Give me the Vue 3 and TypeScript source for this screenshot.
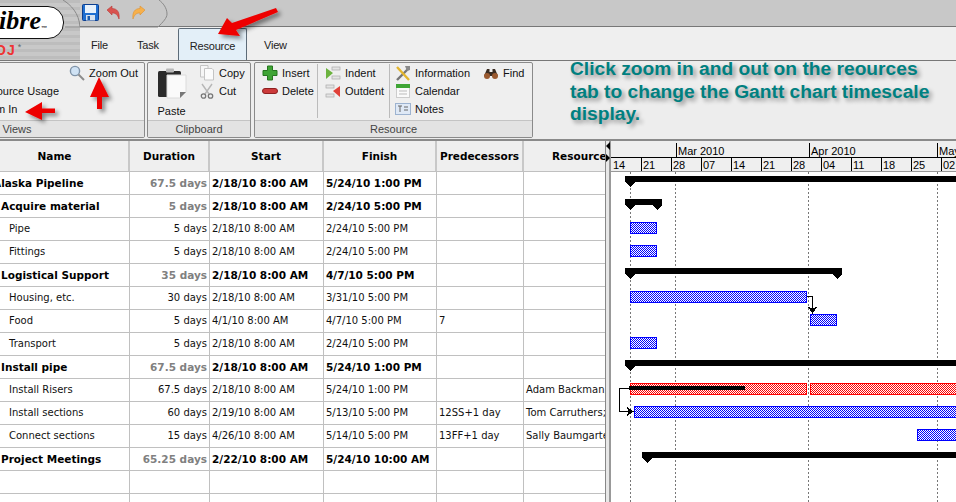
<script setup lang="ts">
interface Row {
  name: string; level: number; bold: boolean; dur: string; start: string; finish: string; pred: string; res: string;
}
const mk = (name: string, level: number, bold: boolean, dur = '', start = '', finish = '', pred = '', res = ''): Row =>
  ({ name, level, bold, dur, start, finish, pred, res });
const rows: Row[] = [
  mk('Alaska Pipeline', 0, true, '67.5 days', '2/18/10 8:00 AM', '5/24/10 1:00 PM'),
  mk('Acquire material', 1, true, '5 days', '2/18/10 8:00 AM', '2/24/10 5:00 PM'),
  mk('Pipe', 2, false, '5 days', '2/18/10 8:00 AM', '2/24/10 5:00 PM'),
  mk('Fittings', 2, false, '5 days', '2/18/10 8:00 AM', '2/24/10 5:00 PM'),
  mk('Logistical Support', 1, true, '35 days', '2/18/10 8:00 AM', '4/7/10 5:00 PM'),
  mk('Housing, etc.', 2, false, '30 days', '2/18/10 8:00 AM', '3/31/10 5:00 PM'),
  mk('Food', 2, false, '5 days', '4/1/10 8:00 AM', '4/7/10 5:00 PM', '7'),
  mk('Transport', 2, false, '5 days', '2/18/10 8:00 AM', '2/24/10 5:00 PM'),
  mk('Install pipe', 1, true, '67.5 days', '2/18/10 8:00 AM', '5/24/10 1:00 PM'),
  mk('Install Risers', 2, false, '67.5 days', '2/18/10 8:00 AM', '5/24/10 1:00 PM', '', 'Adam Backman;Pat'),
  mk('Install sections', 2, false, '60 days', '2/19/10 8:00 AM', '5/13/10 5:00 PM', '12SS+1 day', 'Tom Carruthers;Bob'),
  mk('Connect sections', 2, false, '15 days', '4/26/10 8:00 AM', '5/14/10 5:00 PM', '13FF+1 day', 'Sally Baumgartener'),
  mk('Project Meetings', 1, true, '65.25 days', '2/22/10 8:00 AM', '5/24/10 10:00 AM'),
  mk('', 0, false),
  mk('', 0, false),
];
const months = [
  { label: 'Mar 2010', w: 133 },
  { label: 'Apr 2010', w: 128 },
  { label: 'May 2010', w: 60 },
];
const weeks = ['21', '28', '07', '14', '21', '28', '04', '11', '18', '25', '02'];

function summary(x1: number, x2: number, y: number, rightTip = true): string {
  const p = [`${x1},${y}`, `${x2},${y}`, `${x2},${y + 6}`];
  if (rightTip) p.push(`${x2 - 5},${y + 11}`, `${x2 - 10},${y + 6}`);
  p.push(`${x1 + 10},${y + 6}`, `${x1 + 5},${y + 11}`, `${x1},${y + 6}`);
  return p.join(' ');
}
const summaries = [
  summary(625, 960, 176, false),
  summary(625, 662, 199),
  summary(625, 842, 268),
  summary(625, 960, 360, false),
  summary(642, 960, 452, false),
];
const blueBars = [
  { x: 630.5, y: 222.5, w: 26 },
  { x: 630.5, y: 245.5, w: 26 },
  { x: 630.5, y: 291.5, w: 176 },
  { x: 810.5, y: 314.5, w: 26 },
  { x: 630.5, y: 337.5, w: 26 },
  { x: 634.5, y: 406.5, w: 330 },
  { x: 917.5, y: 429.5, w: 60 },
];
const redBars = [
  { x: 630.5, y: 383.5, w: 176 },
  { x: 810.5, y: 383.5, w: 160 },
];
const guides = [630.5, 675.5, 808.5, 937.5];
</script>

<template>
  <div class="app">
    <header class="head">
      <div class="logo">
        <svg class="logo-curve" width="21" height="27" viewBox="0 0 21 27">
          <path d="M3 0 C11 5 19 13 20 27" fill="none" stroke="#8a8a8a" />
        </svg>
        <div class="pill"><span class="pill-text">ibre</span><span class="tm">™</span></div>
        <div class="brand"><span class="oj">OJ</span><span class="star">*</span></div>
      </div>
      <div class="head-main">
        <div class="quick">
          <svg class="curve" width="100" height="27" viewBox="0 0 100 27">
            <path d="M0 27 H93 C98 22 102 18 102 14 C102 8 98 3 94 0" fill="none" stroke="#8a8a8a" />
          </svg>
          <svg class="qicon" width="17" height="17" viewBox="0 0 17 17">
            <rect x="0.5" y="0.5" width="16" height="16" rx="1" fill="#1f6fd0" stroke="#0d3f8f" />
            <rect x="3" y="1" width="11" height="8" fill="#e8f2fb" />
            <rect x="4" y="11" width="9" height="5.5" fill="#d7e2ee" />
            <rect x="5.5" y="12" width="2.5" height="4" fill="#1c5cab" />
          </svg>
          <svg class="qicon undo" width="15" height="15" viewBox="0 0 15 15">
            <path d="M1 5 L6 1 V3.5 C11 3.5 14 7 13 14 C11.5 9.5 9.5 8 6 8 V10 Z" fill="#d9534f" stroke="#b93a36" stroke-width=".6" />
          </svg>
          <svg class="qicon redo" width="15" height="15" viewBox="0 0 15 15">
            <path d="M14 5 L9 1 V3.5 C4 3.5 1 7 2 14 C3.5 9.5 5.5 8 9 8 V10 Z" fill="#f6b04c" stroke="#dd9230" stroke-width=".6" />
          </svg>
        </div>
        <nav class="tabs">
          <span class="tab tab-file">File</span>
          <span class="tab tab-task">Task</span>
          <span class="tab tab-active">Resource</span>
          <span class="tab tab-view">View</span>
        </nav>
      </div>
    </header>

    <section class="ribbon">
      <div class="group views">
        <div class="body views-body">
          <div class="col views-a">
            <div class="item spacer"></div>
            <div class="item">Resource Usage</div>
            <div class="item">Zoom In</div>
          </div>
          <div class="col">
            <div class="item">
              <svg class="ic" width="16" height="16" viewBox="0 0 16 16">
                <circle cx="6" cy="6" r="4.6" fill="#cfe2f4" stroke="#7f93a8" stroke-width="1.4" />
                <path d="M9.5 9.5 L15 15" stroke="#8c8c8c" stroke-width="2" />
              </svg>
              Zoom Out
            </div>
          </div>
        </div>
        <div class="label">Views</div>
      </div>

      <div class="group clip">
        <div class="body clip-body">
          <div class="paste">
            <svg width="30" height="31" viewBox="0 0 30 31">
              <rect x="1" y="3" width="23" height="26" rx="1.5" fill="#2b2b2b" />
              <rect x="9" y="0.5" width="8" height="4" rx="1" fill="#b8b8b8" />
              <path d="M10 7 H29 V24 L23 30 H10 Z" fill="#fafafa" stroke="#dcdcdc" />
              <path d="M23 30 L23 24 H29 Z" fill="#777" />
            </svg>
            <span>Paste</span>
          </div>
          <div class="col">
            <div class="item">
              <svg class="ic" width="16" height="16" viewBox="0 0 16 16">
                <path d="M1.5 .5 H9 V12 H1.5 Z" fill="#f6f6f6" stroke="#c4c4c4" />
                <path d="M5.5 3.5 H13 L14.5 5 V15 H5.5 Z" fill="#fbfbfb" stroke="#c4c4c4" />
              </svg>
              Copy
            </div>
            <div class="item">
              <svg class="ic" width="16" height="16" viewBox="0 0 16 16">
                <path d="M3 1 L10 11 M13 1 L6 11" stroke="#b6b6b6" stroke-width="1.4" />
                <circle cx="4.5" cy="13" r="2.2" fill="none" stroke="#777" stroke-width="1.3" />
                <circle cx="11.5" cy="13" r="2.2" fill="none" stroke="#777" stroke-width="1.3" />
              </svg>
              Cut
            </div>
          </div>
        </div>
        <div class="label">Clipboard</div>
      </div>

      <div class="group res">
        <div class="body res-body">
          <div class="col cola">
            <div class="item">
              <svg class="ic" width="16" height="16" viewBox="0 0 16 16">
                <path d="M5.5 1 H10.500 V5.500 H15 V10.500 H10.500 V15 H5.500 V10.500 H1 V5.500 H5.500 Z" fill="#3fa535" stroke="#26761f" />
              </svg>
              Insert
            </div>
            <div class="item">
              <svg class="ic" width="16" height="16" viewBox="0 0 16 16">
                <rect x="0.500" y="5.500" width="15" height="5" rx="2.500" fill="#cc3a3a" stroke="#8e2020" />
              </svg>
              Delete
            </div>
          </div>
          <div class="col colb">
            <div class="item">
              <svg class="ic" width="16" height="16" viewBox="0 0 16 16">
                <rect x="7" y="2" width="8" height="3" fill="#e4e4e4" stroke="#aaa" stroke-width=".7" />
                <rect x="7" y="11" width="8" height="3" fill="#e4e4e4" stroke="#aaa" stroke-width=".7" />
                <path d="M1 3 L8 8 L1 14 Z" fill="#6cb33f" />
              </svg>
              Indent
            </div>
            <div class="item">
              <svg class="ic" width="16" height="16" viewBox="0 0 16 16">
                <rect x="1" y="2" width="8" height="3" fill="#e4e4e4" stroke="#aaa" stroke-width=".7" />
                <rect x="1" y="11" width="8" height="3" fill="#e4e4e4" stroke="#aaa" stroke-width=".7" />
                <path d="M15 3 L8 8 L15 14 Z" fill="#e04038" />
              </svg>
              Outdent
            </div>
          </div>
          <div class="col colc">
            <div class="item">
              <svg class="ic" width="16" height="16" viewBox="0 0 16 16">
                <path d="M2 15 L14 3" stroke="#777" stroke-width="2.4" />
                <path d="M2 2 L14 15" stroke="#e3b52c" stroke-width="2.4" />
                <path d="M10 1 L15 1 L15 5 L12 6 Z" fill="#8a8a8a" />
              </svg>
              Information
            </div>
            <div class="item">
              <svg class="ic" width="16" height="16" viewBox="0 0 16 16">
                <rect x="1.500" y="1.500" width="13" height="13" fill="#fafafa" stroke="#ccc" />
                <rect x="1" y="1" width="14" height="4" fill="#3fa535" />
                <path d="M4 8 H12 M4 11 H12" stroke="#bbb" />
              </svg>
              Calendar
            </div>
            <div class="item">
              <svg class="ic" width="16" height="16" viewBox="0 0 16 16">
                <rect x="0.500" y="2.500" width="15" height="11" fill="#dfe9f6" stroke="#9db3d0" />
                <path d="M3 5 H7 M5 5 V11 M9 6 H13 M9 9 H13" stroke="#666" />
              </svg>
              Notes
            </div>
          </div>
          <div class="col cold">
            <div class="item">
              <svg class="ic" width="16" height="16" viewBox="0 0 16 16">
                <path d="M1 11 L4 4 H6.500 V7 H9.500 V4 H12 L15 11 Z" fill="#3a2c22" />
                <circle cx="4" cy="11" r="3" fill="#9a5a30" />
                <circle cx="12" cy="11" r="3" fill="#9a5a30" />
              </svg>
              Find
            </div>
          </div>
        </div>
        <div class="label">Resource</div>
      </div>

      <p class="note">Click zoom in and out on the reources tab to change the Gantt chart timescale display.</p>
    </section>

    <main class="main">
      <div class="table">
        <div class="tr th">
          <div class="c name">Name</div>
          <div class="c dur">Duration</div>
          <div class="c start">Start</div>
          <div class="c fin">Finish</div>
          <div class="c pred">Predecessors</div>
          <div class="c res-col">Resource</div>
        </div>
        <div v-for="(r, i) in rows" :key="i" class="tr" :class="{ b: r.bold }">
          <div class="c name" :class="`lvl${r.level}`">{{ r.name }}</div>
          <div class="c dur" :class="{ grey: r.bold }">{{ r.dur }}</div>
          <div class="c start">{{ r.start }}</div>
          <div class="c fin">{{ r.finish }}</div>
          <div class="c pred">{{ r.pred }}</div>
          <div class="c res-col">{{ r.res }}</div>
        </div>
      </div>

      <div class="split">
        <span class="tri tri-l"></span>
        <span class="tri tri-r"></span>
      </div>

      <div class="gantt">
        <div class="scale">
          <div class="months">
            <span class="m-lead"></span>
            <span v-for="m in months" :key="m.label" class="m" :style="{ width: m.w + 'px' }">{{ m.label }}</span>
          </div>
          <div class="weeks">
            <span class="w w-first">14</span>
            <span v-for="(w, i) in weeks" :key="i" class="w">{{ w }}</span>
          </div>
        </div>
        <svg class="chart" viewBox="611 172 345 330" width="345" height="330" shape-rendering="crispEdges">
          <defs>
            <pattern id="dBlue" width="2" height="2" patternUnits="userSpaceOnUse">
              <rect width="2" height="2" fill="#fff" />
              <rect width="1" height="1" fill="#0000ff" />
              <rect x="1" y="1" width="1" height="1" fill="#0000ff" />
            </pattern>
            <pattern id="dRed" width="2" height="2" patternUnits="userSpaceOnUse">
              <rect width="2" height="2" fill="#fff" />
              <rect width="1" height="1" fill="#ff0000" />
              <rect x="1" y="1" width="1" height="1" fill="#ff0000" />
            </pattern>
          </defs>
          <line v-for="g in guides" :key="g" :x1="g" :x2="g" y1="172" y2="502" stroke="#777" stroke-dasharray="2 2" />
          <polygon v-for="(s, i) in summaries" :key="i" :points="s" fill="#000" />
          <rect v-for="(b, i) in blueBars" :key="'b' + i" :x="b.x" :y="b.y" :width="b.w" height="11" fill="url(#dBlue)" stroke="#0000ff" />
          <rect v-for="(b, i) in redBars" :key="'r' + i" :x="b.x" :y="b.y" :width="b.w" height="11" fill="url(#dRed)" stroke="#ff0000" />
          <rect x="629" y="386" width="116" height="4" fill="#000" />
          <path d="M807 296.500 H812.500 V310" fill="none" stroke="#000" />
          <path d="M812.500 314 L807.500 306 L812.500 309 L817.500 306 Z" fill="#000" />
          <path d="M629 388.500 H619.500 V411.500 H630" fill="none" stroke="#000" />
          <path d="M634 411.500 L626 406.500 L629 411.500 L626 416.500 Z" fill="#000" />
        </svg>
      </div>
    </main>

    <svg class="arrows" width="956" height="502" viewBox="0 0 956 502">
      <defs>
        <filter id="sh" x="-30%" y="-30%" width="170%" height="170%">
          <feDropShadow dx="3" dy="3" stdDeviation="2" flood-color="#000" flood-opacity=".45" />
        </filter>
      </defs>
      <g fill="#ee0000" filter="url(#sh)">
        <path d="M276 8 L278 12 L236 30 L240 36 L218 34 L227 18 L232 23 Z" />
        <path d="M99 77 L109 97 H102 V109 H97 V97 H90 Z" />
        <path d="M25 112 L42 102 V108.500 H55 V113 H42 V120 Z" />
      </g>
    </svg>
  </div>
</template>

<style>
html, body { margin: 0; padding: 0; background: #fff; }
</style>

<style scoped>
.app {
  position: relative;
  width: 956px;
  height: 502px;
  overflow: hidden;
  font-family: "DejaVu Sans", sans-serif;
  font-size: 10px;
  color: #111;
  background: #fff;
}
.head { display: flex; height: 61px; box-sizing: border-box; border-bottom: 1px solid #777; background: #efefef; }
.logo {
  position: relative;
  width: 80px;
  flex: none;
  overflow: hidden;
  background: repeating-linear-gradient(180deg, #bdbdbd 0 3px, #c8c8c8 3px 7px);
}
.logo-curve { position: absolute; left: 60px; top: 0; }
.pill {
  display: flex;
  align-items: flex-end;
  justify-content: flex-end;
  box-sizing: border-box;
  width: 95px;
  height: 33px;
  margin: 6px 0 0 -31px;
  padding: 0 16px 4px 0;
  background: #fff;
  border: 1px solid #111;
  border-radius: 16px;
}
.pill-text {
  font: italic bold 26px/26px "Liberation Serif", serif;
  color: #000;
}
.tm { font: bold 6px/8px "Liberation Sans", sans-serif; color: #222; margin-bottom: 2px; }
.brand { display: flex; margin: 3px 0 0 -5px; }
.oj { font: bold 14px/16px "Liberation Sans", sans-serif; color: #ee3333; letter-spacing: 1px; }
.star { font: 9px/10px "Liberation Sans", sans-serif; color: #666; margin-left: 2px; }
.head-main { flex: 1; display: flex; flex-direction: column; }
.quick {
  position: relative;
  display: flex;
  align-items: center;
  height: 27px;
  box-sizing: border-box;
  flex: none;
  padding: 0 0 2px 2px;
  background: #c8c8c8;
  border-bottom: 1px solid #777;
}
.curve { position: absolute; left: -16px; top: 0; width: 102px; height: 27px; overflow: visible; }
.qicon { position: relative; }
.undo { margin-left: 7px; }
.redo { margin-left: 10px; }
.tabs { display: flex; flex: 1; align-items: stretch; font-family: "Liberation Sans", sans-serif; font-size: 11px; letter-spacing: -.2px; }
.tab { display: flex; align-items: center; color: #222; padding-top: 2px; }
.tab-file { margin-left: 11px; width: 46px; }
.tab-task { width: 41px; }
.tab-active {
  width: 69px;
  box-sizing: border-box;
  justify-content: center;
  background: #e3eff8;
  border: 1px solid #5d6b78;
  border-bottom: none;
  border-radius: 2px 2px 0 0;
  margin-top: 1px;
}
.tab-view { margin-left: 17px; }

.ribbon {
  display: flex;
  height: 80px;
  box-sizing: border-box;
  gap: 2px;
  margin-left: -111px;
  padding-top: 1px;
  background: #ededed;
  border-bottom: 2px solid #8a8a8a;
  font-family: "Liberation Sans", sans-serif;
  font-size: 11px;
}
.group {
  display: flex;
  flex-direction: column;
  flex: none;
  box-sizing: border-box;
  height: 76px;
  background: #efefef;
  border: 1px solid #8a8a8a;
  border-radius: 2px;
}
.body { flex: 1; display: flex; padding-top: 1px; }
.label {
  height: 16px;
  line-height: 17px;
  text-align: center;
  background: #e3e3e3;
  border-top: 1px solid #c4c4c4;
  color: #444;
}
.views { width: 256px; }
.clip { width: 104px; }
.res { width: 279px; margin-left: 1px; }
.views-body { justify-content: flex-end; padding-right: 6px; }
.views-a { width: 92px; }
.col { display: flex; flex-direction: column; }
.item { display: flex; align-items: center; gap: 4px; height: 18px; white-space: nowrap; }
.ic { flex: none; }
.clip-body { padding-left: 8px; gap: 12px; }
.paste { display: flex; flex-direction: column; align-items: center; width: 31px; gap: 6px; padding-top: 4px; }
.cola { width: 55px; padding-left: 7px; border-right: 1px solid #bbb; margin-bottom: 2px; }
.colb { width: 64px; padding-left: 7px; border-right: 1px solid #bbb; margin-bottom: 2px; }
.colc { width: 88px; padding-left: 5px; }
.note {
  margin: -4px 0 0 35px;
  width: 375px;
  font: bold 19.200px/22.5px "Liberation Sans", sans-serif;
  color: #008080;
  text-shadow: 3px 3px 4px rgba(0, 0, 0, .4);
}

.main { display: flex; height: 361px; }
.table { width: 624px; margin-left: -19px; flex: none; overflow: hidden; }
.tr { display: flex; height: 23px; box-sizing: border-box; border-bottom: 1px solid #c0c0c0; }
.c {
  flex: none;
  box-sizing: border-box;
  padding: 0 2px;
  line-height: 22px;
  white-space: nowrap;
  overflow: hidden;
  border-right: 1px solid #c0c0c0;
  color: #111;
}
.name { width: 149px; }
.dur { width: 80px; text-align: right; }
.start { width: 114px; }
.fin { width: 113px; }
.pred { width: 87px; }
.res-col { width: 81px; border-right: none; }
.lvl0 { padding-left: 12px; }
.lvl1 { padding-left: 20px; }
.lvl2 { padding-left: 28px; }
.b .c { font-weight: 700; font-size: 10.500px; color: #000; }
.b .dur.grey { color: #808080; }
.th {
  height: 31px;
  background: #efefef;
  border-bottom: 1px solid #c0c0c0;
}
.th .c {
  line-height: 30px;
  text-align: center;
  font-weight: 700;
  font-size: 10.500px;
  color: #000;
  border-right: 2px solid #c8c8c8;
}
.th .res-col { border-right: none; text-align: left; padding-left: 28px; }
.split {
  position: relative;
  width: 6px;
  flex: none;
  background: linear-gradient(90deg, #888 0 1px, #e8e8e8 1px 4px, #999 4px 6px);
}
.tri { position: absolute; left: 1px; width: 0; height: 0; border-style: solid; }
.tri-l { top: 1px; border-width: 4px 4px 4px 0; border-color: transparent #000 transparent transparent; }
.tri-r { top: 13px; border-width: 4px 0 4px 4px; border-color: transparent transparent transparent #000; }
.gantt { flex: 1; display: flex; flex-direction: column; min-width: 0; overflow: hidden; }
.scale {
  height: 31px;
  flex: none;
  box-sizing: border-box;
  padding-top: 2px;
  background: #efefef;
  border-bottom: 1px solid #999;
  font-family: "Liberation Sans", sans-serif;
  font-size: 11px;
  color: #000;
}
.months { display: flex; height: 14px; border-bottom: 1px solid #000; }
.m-lead { width: 65px; flex: none; }
.m { flex: none; box-sizing: border-box; padding-left: 1px; line-height: 16px; border-left: 1px solid #000; white-space: nowrap; }
.weeks { display: flex; height: 13px; }
.w { flex: none; width: 30px; box-sizing: border-box; padding-left: 1px; line-height: 15px; border-left: 1px solid #000; }
.w-first { border-left: none; padding-left: 2px; }
.chart { display: block; flex: none; }
.arrows { position: absolute; left: 0; top: 0; pointer-events: none; }
</style>
